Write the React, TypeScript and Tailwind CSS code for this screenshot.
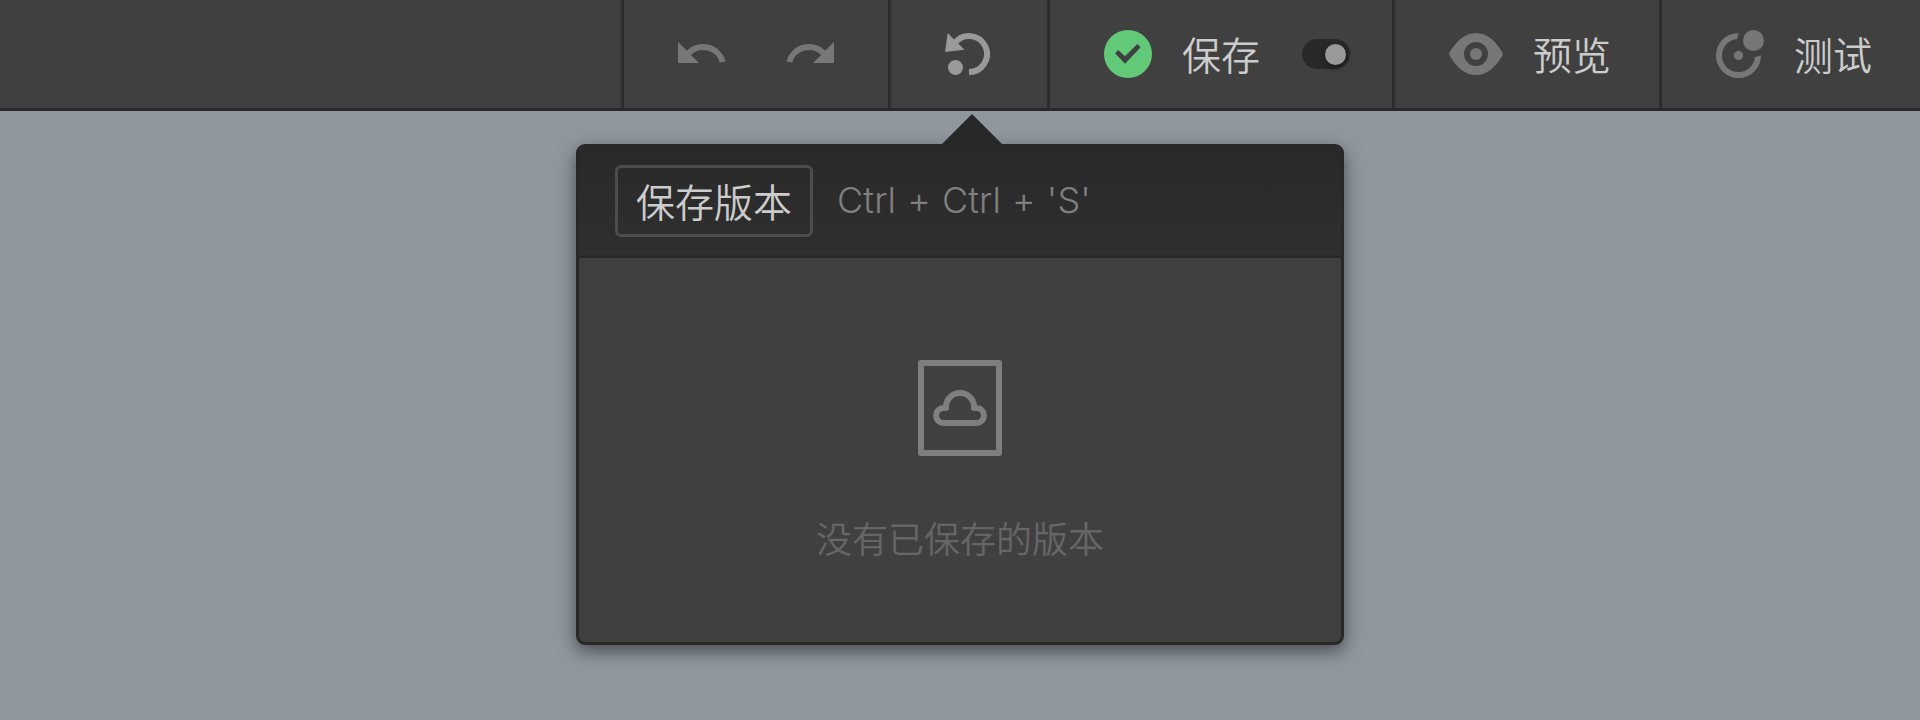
import React from "react";

const cjk = "font-['Inter','Noto_Sans_CJK_SC',sans-serif]";

function ArrowTurn({ flip = false }: { flip?: boolean }) {
  return (
    <svg width="48" height="24" viewBox="0 0 48 24" className={flip ? "-scale-x-100" : ""}>
      <path d="M0 0V21H21Z" fill="#777777" />
      <path d="M10.5 11A20.6 20.6 0 0 1 44.8 20" fill="none" stroke="#777777" strokeWidth="6" />
    </svg>
  );
}

function HistoryIcon() {
  return (
    <svg width="48" height="48" viewBox="942 30 48 48">
      <path d="M969 72A18 18 0 1 0 955 42.7" fill="none" stroke="#999999" strokeWidth="6" />
      <path d="M947.7 33L945 52L964.5 49.7Z" fill="#999999" />
      <circle cx="955.5" cy="67.5" r="7.5" fill="#999999" />
    </svg>
  );
}

function CheckIcon() {
  return (
    <svg width="48" height="48" viewBox="0 0 48 48">
      <circle cx="24" cy="24" r="24" fill="#62c979" />
      <path d="M11 23.3L14.3 20L20.9 26.2L33.3 14L36.7 17.3L21 33.8Z" fill="#404040" />
    </svg>
  );
}

function EyeIcon() {
  return (
    <svg width="54" height="42" viewBox="0 0 54 42">
      <path
        fillRule="evenodd"
        fill="#777777"
        d="M0.4 22.2Q-0.2 21 0.4 19.8C7 9 15 0 27 0S47 9 53.6 19.8Q54.2 21 53.6 22.2C47 33 39 42 27 42S7 33 0.4 22.2ZM27 9A12 12 0 1 0 27 33A12 12 0 1 0 27 9Z"
      />
      <circle cx="27" cy="21" r="6" fill="#777777" />
    </svg>
  );
}

function TestIcon() {
  return (
    <svg width="48" height="48" viewBox="0 0 48 48">
      <mask id="orbit-gap">
        <rect width="48" height="48" fill="white" />
        <circle cx="37.5" cy="10.5" r="16.5" fill="black" />
      </mask>
      <circle cx="22.5" cy="25.5" r="19.5" fill="none" stroke="#777777" strokeWidth="6" mask="url(#orbit-gap)" />
      <circle cx="22.5" cy="25.5" r="4.5" fill="#777777" />
      <circle cx="37.5" cy="10.5" r="10.5" fill="#777777" />
    </svg>
  );
}

function EmptyIcon() {
  return (
    <svg width="84" height="96" viewBox="918 360 84 96" fill="none" stroke="#7f7f7f" strokeWidth="6" strokeLinejoin="round">
      <rect x="921" y="363" width="78" height="90" />
      <path d="M943.5 423A7.5 7.5 0 0 1 943.5 408H946V407A14 14 0 0 1 974 407V408H976.5A7.5 7.5 0 0 1 976.5 423Z" />
    </svg>
  );
}

function Section({ className, children }: { className: string; children: React.ReactNode }) {
  return <div className={`flex h-full items-center border-l-3 border-[#2d2d2d] ${className}`}>{children}</div>;
}

function Label({ children }: { children: React.ReactNode }) {
  return <span className="ml-[30px] whitespace-nowrap pt-[4px] text-[39px] font-[350] leading-[54px] text-[#cccccc]">{children}</span>;
}

export default function App() {
  return (
    <div className={`h-[720px] w-[1920px] overflow-hidden bg-[#90979f] ${cjk}`}>
      <header className="flex h-[111px] items-center justify-end border-b-3 border-[#282828] bg-[#404040]">
        <Section className="gap-[60px] px-[54px]">
          <ArrowTurn />
          <ArrowTurn flip />
        </Section>
        <Section className="pl-[51px] pr-[57px]">
          <HistoryIcon />
        </Section>
        <Section className="pl-[54px] pr-[42px]">
          <CheckIcon />
          <Label>保存</Label>
          <div className="ml-[42px] flex h-[30px] w-12 items-center justify-end rounded-full bg-[#282828] pr-[4px]">
            <div className="size-[21px] rounded-full bg-[#999999] shadow-[0_3px_6px_rgba(0,0,0,0.3)]" />
          </div>
        </Section>
        <Section className="pl-[54px] pr-12">
          <EyeIcon />
          <Label>预览</Label>
        </Section>
        <Section className="pl-[54px] pr-12">
          <TestIcon />
          <Label>测试</Label>
        </Section>
      </header>

      <section className="relative mx-auto mt-[33px] flex h-[501px] w-[768px] flex-col rounded-[9px] border-3 border-[#282828] bg-[#404040] shadow-[0_6px_18px_rgba(0,0,0,0.5)]">
        <svg className="absolute -top-[33px] left-[363px]" width="60" height="31" viewBox="0 0 60 31">
          <path d="M30 0L60 30V31H0V30Z" fill="#282828" />
        </svg>
        <div className="flex h-[111px] items-start rounded-t-[6px] border-b-3 border-[#282828] bg-linear-to-b from-[#292929] to-[#2f2f2f] pl-9 pt-[18px]">
          <button className="flex h-[72px] w-[198px] items-center justify-center rounded-[6px] border-3 border-[#4d4d4d] pt-[3px] text-[39px] font-[350] leading-[54px] text-[#cccccc]">
            保存版本
          </button>
          <span className="ml-[24px] mt-[8px] whitespace-nowrap font-['Inter',sans-serif] text-[36px] font-light leading-[54px] tracking-[0.1px] text-[#808080] [font-feature-settings:'calt'_0] [word-spacing:0.9px]">
            Ctrl + Ctrl + 'S'
          </span>
        </div>
        <div className="flex flex-col items-center pt-[102px]">
          <EmptyIcon />
          <p className="mt-[57px] text-[36px] font-[350] leading-[54px] text-[#666666]">没有已保存的版本</p>
        </div>
      </section>
    </div>
  );
}
